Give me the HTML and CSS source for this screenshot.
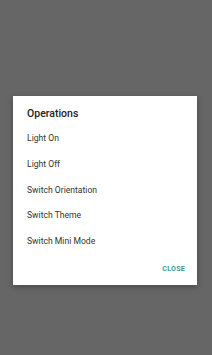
FILE: index.html
```html
<!DOCTYPE html>
<html lang="en">
<head>
  <meta charset="UTF-8" />
  <meta name="viewport" content="width=device-width, initial-scale=1.0" />
  <title>Operations</title>
  <link rel="stylesheet" href="styles.css">
</head>
<body>
  <div class="dialog">
    <h1 class="dialog-title">Operations</h1>
    <ul class="menu">
      <li>Light On</li>
      <li>Light Off</li>
      <li>Switch Orientation</li>
      <li>Switch Theme</li>
      <li>Switch Mini Mode</li>
    </ul>
    <div class="actions">
      <button type="button">CLOSE</button>
    </div>
  </div>
</body>
</html>
```

FILE: styles.css
```css
body {
  margin: 0;
  height: 355px;
  background-color: #666;
  font-family: Roboto, "Noto Sans", sans-serif;
  padding-top: 96px;
  box-sizing: border-box;
}
.dialog {
  margin-left: 13px;
  width: 184px;
  height: 189px;
  background: #fff;
  box-sizing: border-box;
  padding: 10px 12px 8px 14px;
  box-shadow: 0 2px 6px rgba(0,0,0,0.3);
}
.dialog-title {
  margin: 0;
  font-size: 10.5px;
  line-height: 16px;
  font-weight: 500;
  color: #212121;
}
.menu {
  list-style: none;
  margin: 4px 0 0;
  padding: 0;
}
.menu li {
  font-size: 8.6px;
  line-height: 25.8px;
  color: #333;
}
.actions {
  display: flex;
  justify-content: flex-end;
  margin-top: 6px;
}
.actions button {
  border: none;
  background: none;
  padding: 0;
  font-family: inherit;
  font-size: 7px;
  line-height: 16px;
  font-weight: 700;
  color: #3a9a8e;
  letter-spacing: 0.3px;
}
```
